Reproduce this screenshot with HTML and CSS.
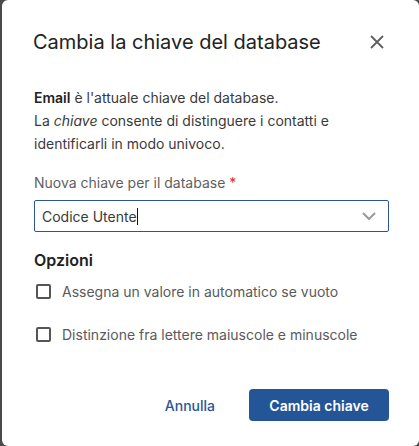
FILE: index.html
```html
<!DOCTYPE html>
<html lang="it">
<head>
<meta charset="utf-8">
<link rel="stylesheet" href="styles.css">
</head>
<body>
<div class="dialog">
  <div class="header">
    <h1 class="title">Cambia la chiave del database</h1>
    <button class="close" aria-label="Chiudi">
      <svg width="14" height="14" viewBox="0 0 14 14"><path d="M1 1L13 13M13 1L1 13" stroke="#5f5f5f" stroke-width="1.8" fill="none"/></svg>
    </button>
  </div>
  <p class="desc"><b>Email</b> è l'attuale chiave del database.<br>La <i>chiave</i> consente di distinguere i contatti e identificarli in modo univoco.</p>
  <div class="label">Nuova chiave per il database <span class="req">*</span></div>
  <div class="select">
    <span class="value">Codice Utente</span><span class="caret"></span>
    <svg class="chev" width="14" height="8" viewBox="0 0 14 8"><path d="M1 1L7 7L13 1" stroke="#9a9a9a" stroke-width="2" fill="none"/></svg>
  </div>
  <div class="section">Opzioni</div>
  <label class="check first"><span class="box"></span>Assegna un valore in automatico se vuoto</label>
  <label class="check second"><span class="box"></span>Distinzione fra lettere maiuscole e minuscole</label>
  <div class="footer">
    <button class="link">Annulla</button>
    <button class="primary">Cambia chiave</button>
  </div>
</div>
</body>
</html>
```
FILE: styles.css
```css
html, body { margin: 0; padding: 0; }
body {
  background: #4a4a4a;
  font-family: Inter, "Noto Sans", sans-serif;
  width: 419px;
  height: 446px;
  overflow: hidden;
}
.dialog {
  margin-left: 2px;
  height: 446px;
  background: #fff;
  border-radius: 6px;
  padding: 28px 30px 0 32px;
  box-sizing: border-box;
}
.header {
  display: flex;
  align-items: center;
  justify-content: space-between;
  height: 28px;
}
.title {
  margin: 0 0 0 -1px;
  font-size: 20px;
  font-weight: 400;
  color: #222;
  line-height: 28px;
}
.close {
  border: 0;
  background: none;
  padding: 0;
  margin-right: 5px;
  width: 14px;
  height: 14px;
  display: flex;
}
.desc {
  margin: 30px 0 0;
  font-size: 14px;
  line-height: 23px;
  color: #3a3a3a;
}
.desc b { font-weight: 600; color: #222; }
.label {
  margin-top: 18px;
  font-size: 14px;
  line-height: 20px;
  color: #5f5f5f;
}
.req { color: #d9302c; }
.select {
  margin-top: 7px;
  height: 32px;
  box-sizing: border-box;
  border: 1px solid #2c5596;
  border-radius: 2px;
  display: flex;
  align-items: center;
  padding: 0 12px 0 7px;
  font-size: 14px;
  color: #3a3a3a;
}
.caret {
  width: 1px;
  height: 17px;
  background: #111;
}
.chev { margin-left: auto; }
.section {
  margin-top: 16px;
  font-size: 16px;
  font-weight: 600;
  line-height: 24px;
  color: #222;
}
.check {
  display: flex;
  align-items: center;
  height: 24px;
  font-size: 14px;
  color: #5a5a5a;
}
.check.first { margin-top: 7px; }
.check.second { margin-top: 19px; }
.box {
  width: 15px;
  height: 15px;
  box-sizing: border-box;
  border: 2px solid #555;
  border-radius: 2px;
  margin: 0 11px 0 2px;
}
.footer {
  margin-top: 43px;
  display: flex;
  justify-content: flex-end;
  align-items: center;
  gap: 34px;
}
.link {
  border: 0;
  background: none;
  padding: 0;
  font-family: inherit;
  font-size: 14px;
  font-weight: 500;
  color: #2a5598;
}
.primary {
  width: 140px;
  height: 32px;
  border: 0;
  border-radius: 4px;
  background: #235597;
  color: #fff;
  font-family: inherit;
  font-size: 14px;
  font-weight: 600;
}
```
